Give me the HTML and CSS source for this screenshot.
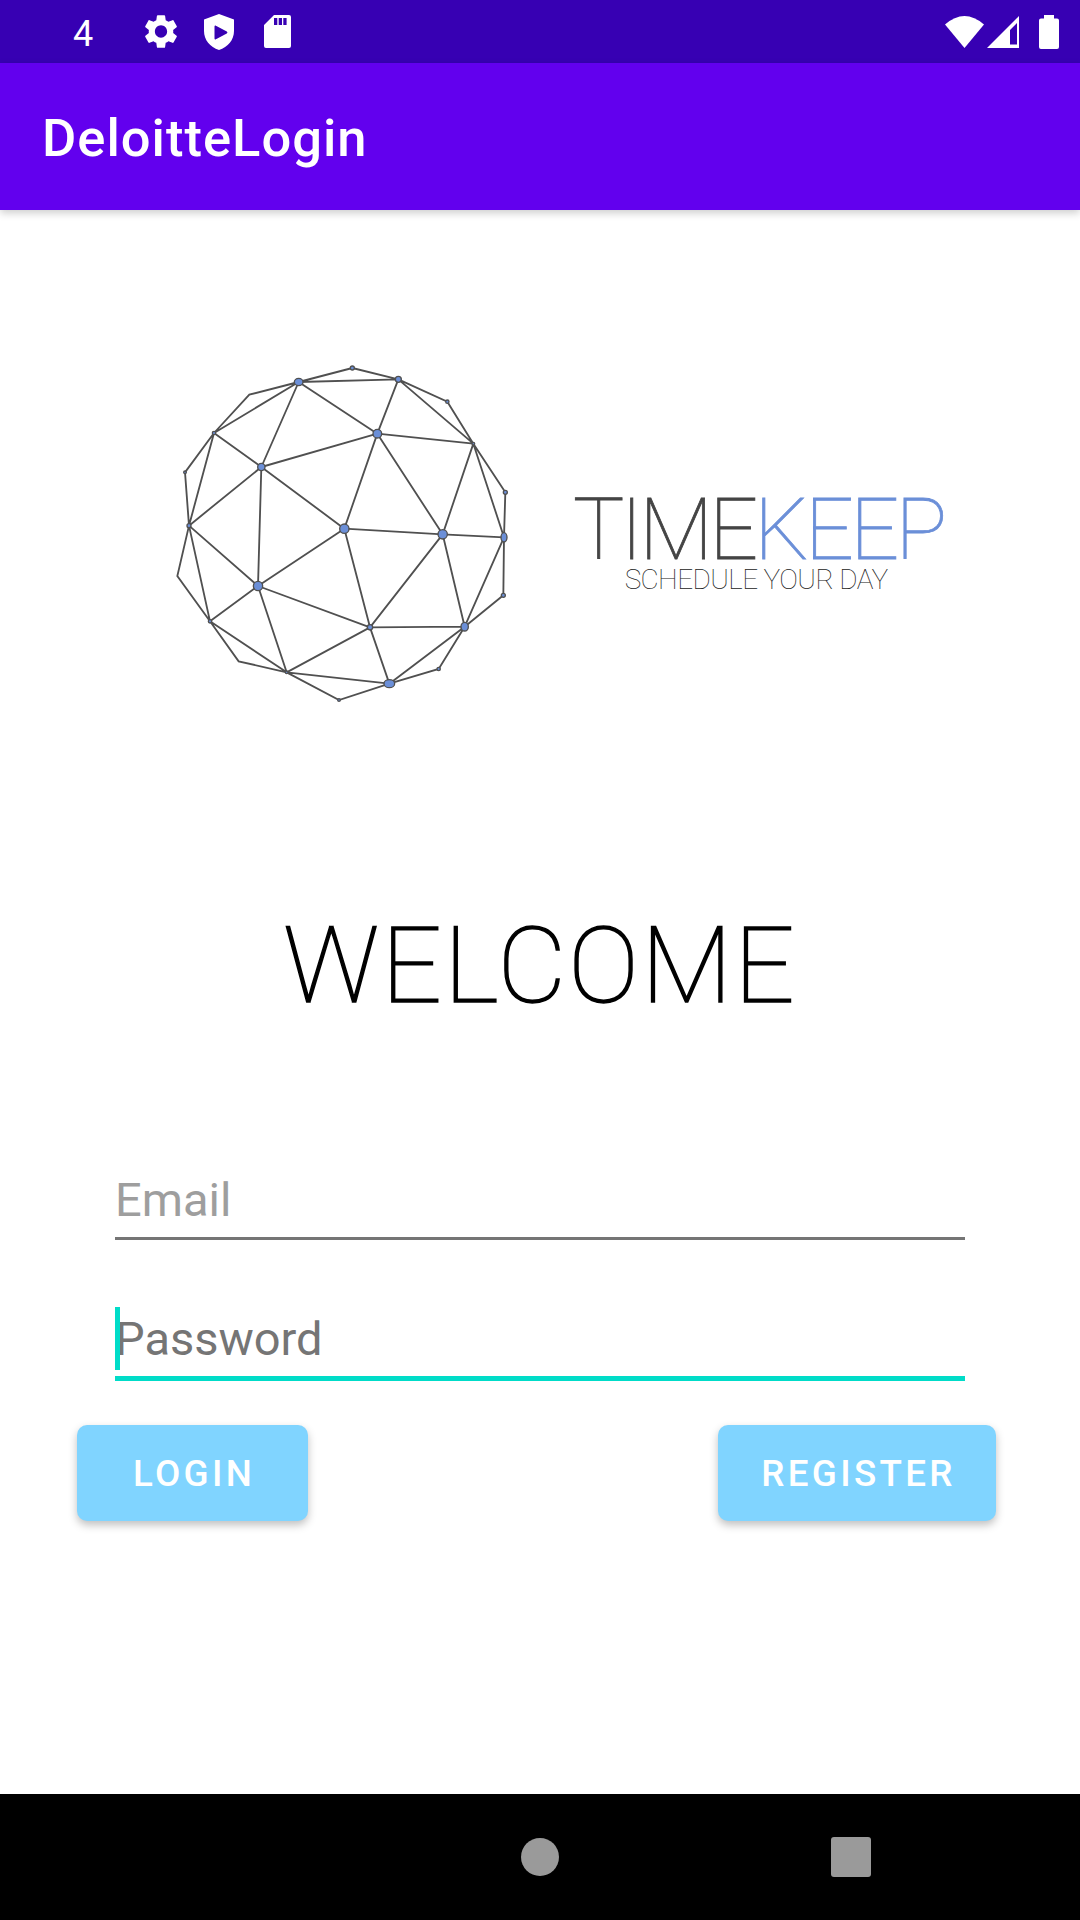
FILE: index.html
```html
<!DOCTYPE html>
<html lang="en">
<head>
<meta charset="UTF-8">
<meta name="viewport" content="width=device-width, initial-scale=1.0">
<title>DeloitteLogin</title>
<link rel="stylesheet" href="styles.css">
</head>
<body>
<div class="status-bar">
  <span class="status-time">4</span>
  <svg class="icon-gear" viewBox="2.6 2.6 18.8 18.8"><path d="M19.14 12.94c.04-.3.06-.61.06-.94 0-.32-.02-.64-.07-.94l2.03-1.58c.18-.14.23-.41.12-.61l-1.92-3.32c-.12-.22-.37-.29-.59-.22l-2.39.96c-.5-.38-1.03-.7-1.62-.94l-.36-2.54c-.04-.24-.24-.41-.48-.41h-3.84c-.24 0-.43.17-.47.41l-.36 2.54c-.59.24-1.13.57-1.62.94l-2.39-.96c-.22-.08-.47 0-.59.22L2.74 8.87c-.12.21-.08.47.12.61l2.03 1.58c-.05.3-.09.63-.09.94s.02.64.07.94l-2.03 1.58c-.18.14-.23.41-.12.61l1.92 3.32c.12.22.37.29.59.22l2.39-.96c.5.38 1.03.7 1.62.94l.36 2.54c.05.24.24.41.48.41h3.84c.24 0 .44-.17.47-.41l.36-2.54c.59-.24 1.13-.56 1.62-.94l2.39.96c.22.08.47 0 .59-.22l1.92-3.32c.12-.22.07-.47-.12-.61l-2.01-1.58zM12 15.6c-1.98 0-3.6-1.62-3.6-3.6s1.62-3.6 3.6-3.6 3.6 1.62 3.6 3.6-1.62 3.6-3.6 3.6z"/></svg>
  <svg class="icon-shield" viewBox="0 0 30 36"><path fill-rule="evenodd" d="M15 0L30 5.5V17C30 26 24 33 15 36C6 33 0 26 0 17V5.5ZM10.5 12.5V24.5C10.5 25.3 11.2 25.6 11.9 25.2L22.8 19.5C23.6 19 23.6 18 22.8 17.6L11.9 11.8C11.2 11.4 10.5 11.7 10.5 12.5Z"/></svg>
  <svg class="icon-sd" viewBox="0 0 27 33"><path fill-rule="evenodd" d="M10 0H25a2 2 0 0 1 2 2V31a2 2 0 0 1-2 2H2a2 2 0 0 1-2-2V10ZM10 3V10H13.3V3ZM14.7 3V10H18V3ZM19.3 3V10H22.6V3Z"/></svg>
  <div class="status-right">
    <svg class="icon-wifi" viewBox="0 0 39 32"><path d="M19.5 32L0 8.5Q19.5-8.5 39 8.5Z"/></svg>
    <svg class="icon-signal" viewBox="0 0 32 32"><path fill-rule="evenodd" d="M0 32L32 0V32ZM30 7L23 14V28.5H30Z"/></svg>
    <svg class="icon-battery" viewBox="0 0 20 34"><path d="M5 0H15V3.5H18a2 2 0 0 1 2 2V32a2 2 0 0 1-2 2H2a2 2 0 0 1-2-2V5.5a2 2 0 0 1 2-2H5Z"/></svg>
  </div>
</div>

<div class="app-bar">DeloitteLogin</div>

<div class="content">
  <div class="logo-row">
    <svg class="logo-mesh" viewBox="0 0 1080 1080">
      <path class="mesh-lines" d="M577 54L416 96M577 54L715 88M416 96L715 88M416 96L268 134L162 249M416 96L162 249M416 96L304 351M416 96L652 251M715 88L652 251M715 88L862 155L940 281M715 88L940 281M940 281L652 251M652 251L304 351M304 351L162 249M162 249L75 367L87 527M162 249L87 527M304 351L87 527M304 351L553 536M304 351L294 708M652 251L553 536M652 251L848 553M940 281L848 553M940 281L1036 427L1032 562M940 281L1032 562M848 553L1032 562M553 536L848 553M553 536L294 708M553 536L630 832M848 553L630 832M848 553L914 830M1032 562L914 830M1032 562L1030 736L914 830M630 832L914 830M630 832L294 708M630 832L380 967M630 832L688 1001M914 830L688 1001M914 830L836 957L688 1001M380 967L688 1001M380 967L537 1050L688 1001M294 708L87 527M294 708L150 814M294 708L380 967M87 527L150 814M87 527L52 678L150 814M150 814L236 934L380 967M150 814L380 967"/>
      <g class="mesh-nodes">
        <circle cx="577" cy="54" r="6"/><circle cx="715" cy="88" r="9"/><ellipse cx="416" cy="96" rx="13" ry="11"/>
        <circle cx="862" cy="155" r="5"/><circle cx="162" cy="249" r="5"/><circle cx="652" cy="251" r="13"/>
        <circle cx="940" cy="281" r="4"/><circle cx="304" cy="351" r="11"/><circle cx="75" cy="367" r="4"/>
        <circle cx="1036" cy="427" r="6"/><circle cx="87" cy="527" r="6"/><circle cx="553" cy="536" r="14"/>
        <circle cx="848" cy="553" r="14"/><ellipse cx="1032" cy="562" rx="9" ry="14"/><circle cx="294" cy="708" r="14"/>
        <circle cx="1030" cy="736" r="6"/><circle cx="150" cy="814" r="5"/><circle cx="630" cy="832" r="8"/>
        <ellipse cx="914" cy="830" rx="11" ry="13"/><circle cx="836" cy="957" r="5"/><circle cx="380" cy="967" r="4"/>
        <ellipse cx="688" cy="1001" rx="16" ry="12"/><circle cx="537" cy="1050" r="4"/>
      </g>
    </svg>
    <div class="brand">
      <div class="brand-name">TIME<span class="brand-accent">KEEP</span></div>
      <div class="brand-tag">SCHEDULE YOUR DAY</div>
    </div>
  </div>

  <h1 class="welcome">WELCOME</h1>

  <div class="form">
    <div class="field field-email">Email</div>
    <div class="field field-password"><span class="caret"></span>Password</div>
  </div>

  <div class="buttons">
    <div class="btn btn-login">LOGIN</div>
    <div class="btn btn-register">REGISTER</div>
  </div>
</div>

<div class="nav-bar">
  <span class="nav-home"></span>
  <span class="nav-recent"></span>
</div>
</body>
</html>
```

FILE: styles.css
```css
html, body {
  margin: 0;
  padding: 0;
  height: 100%;
}
body {
  display: flex;
  flex-direction: column;
  height: 1920px;
  background: #fff;
  font-family: Roboto, "Noto Sans", sans-serif;
  overflow: hidden;
}
.status-bar {
  height: 63px;
  background: #3700b3;
  display: flex;
  align-items: center;
  padding: 0 21px 0 73px;
  color: #fff;
}
.status-bar svg {
  fill: #fff;
  display: block;
}
.status-time {
  font-size: 36px;
  line-height: 60px;
  padding-top: 5px;
  width: 72px;
}
.icon-gear {
  width: 32px;
  height: 33px;
  margin-right: 27px;
}
.icon-shield {
  width: 30px;
  height: 36px;
  margin-right: 30px;
}
.icon-sd {
  width: 27px;
  height: 33px;
}
.status-right {
  margin-left: auto;
  display: flex;
  align-items: center;
}
.icon-wifi {
  width: 39px;
  height: 32px;
  margin-right: 3px;
}
.icon-signal {
  width: 32px;
  height: 32px;
  margin-right: 20px;
}
.icon-battery {
  width: 20px;
  height: 34px;
}
.app-bar {
  height: 147px;
  background: #6200ee;
  color: #fff;
  font-size: 52.5px;
  font-weight: 500;
  letter-spacing: 1px;
  line-height: 150px;
  padding-left: 42px;
  box-shadow: 0 3px 8px rgba(0,0,0,.2);
  position: relative;
}
.content {
  flex: 1;
}
.logo-row {
  display: flex;
  align-items: center;
  padding: 140px 0 0 160px;
}
.logo-mesh {
  width: 360px;
  height: 360px;
  flex: none;
}
.mesh-lines {
  fill: none;
  stroke: #505050;
  stroke-width: 5.5;
}
.mesh-nodes {
  fill: #6b8fd8;
  stroke: #505050;
  stroke-width: 4;
}
.brand {
  margin: 31px 0 0 53px;
  text-align: center;
}
.brand-name {
  font-size: 86px;
  font-weight: 100;
  line-height: 68px;
  letter-spacing: -3.8px;
  color: #444;
  -webkit-text-stroke: .8px #444;
  white-space: nowrap;
}
.brand-accent {
  color: #6b8fd8;
  -webkit-text-stroke: .8px #6b8fd8;
}
.brand-tag {
  font-size: 28px;
  font-weight: 100;
  line-height: 32px;
  letter-spacing: -.6px;
  color: #222;
  padding-right: 4px;
  white-space: nowrap;
}
.welcome {
  margin: 191px 0 0;
  font-size: 106px;
  font-weight: 100;
  line-height: 130px;
  letter-spacing: 2.2px;
  text-align: center;
  color: #000;
  -webkit-text-stroke: 1.5px #000;
}
.form {
  margin: 0 115px;
  padding-top: 133px;
}
.field {
  font-size: 47px;
  line-height: 60px;
  padding: 6px 0 7px;
  position: relative;
}
.field-email {
  color: #9e9e9e;
  border-bottom: 3px solid #757575;
}
.field-password {
  color: #757575;
  margin-top: 63px;
  border-bottom: 5px solid #00dcc8;
}
.caret {
  position: absolute;
  left: 0;
  bottom: 6px;
  width: 5px;
  height: 63px;
  background: #00dcc8;
}
.buttons {
  display: flex;
  justify-content: space-between;
  padding: 44px 84px 0 77px;
}
.btn {
  height: 96px;
  line-height: 98px;
  background: #80d4ff;
  color: #fff;
  border-radius: 10px;
  font-size: 36.75px;
  font-weight: 500;
  letter-spacing: 3.3px;
  text-align: center;
  box-sizing: border-box;
  padding-left: 3px;
  box-shadow: 0 4px 8px rgba(0,0,0,.25);
}
.btn-login {
  width: 231px;
}
.btn-register {
  width: 278px;
}
.nav-bar {
  height: 126px;
  background: #000;
  display: flex;
  align-items: center;
  padding-left: 521px;
}
.nav-home {
  width: 38px;
  height: 38px;
  border-radius: 50%;
  background: #9a9a9a;
}
.nav-recent {
  width: 40px;
  height: 40px;
  border-radius: 3px;
  background: #9a9a9a;
  margin-left: 272px;
}
```
